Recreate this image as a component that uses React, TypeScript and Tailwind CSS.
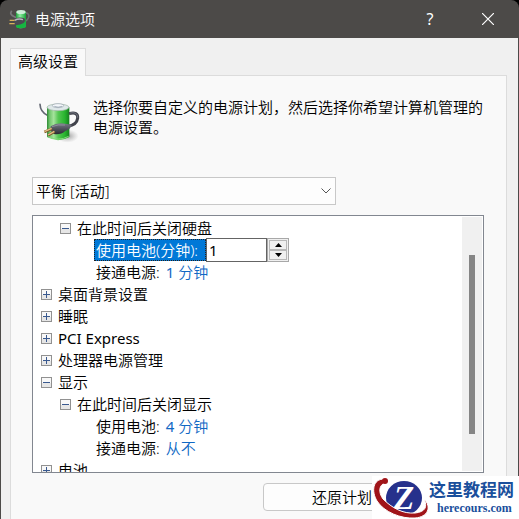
import { FC, ReactNode, useState } from "react";

interface TreeRowProps {
    level: 0 | 1 | 2
    open?: boolean
    label: string
    latin?: boolean
    children?: ReactNode
}

const TitleIcon: FC = () => (
    <svg className="h-[22px] w-[22px] shrink-0" viewBox="28 24 66 66" aria-hidden="true">
        <defs>
            <linearGradient id="small-body" x1="0" x2="1">
                <stop offset="0" stopColor="#1f9a3c" />
                <stop offset="0.4" stopColor="#8df0a0" />
                <stop offset="1" stopColor="#17a038" />
            </linearGradient>
        </defs>
        <path d="M36 32 Q28 44 44 50 L52 54" fill="none" stroke="#77777a" strokeWidth="5" />
        <path d="M76 38 Q92 40 86 54 Q80 66 68 66" fill="none" stroke="#6c6c70" strokeWidth="5" />
        <path d="M49 36 Q63 28 79 36 V81 Q63 89 49 81Z" fill="url(#small-body)" />
        <ellipse cx="64" cy="36" rx="14" ry="6" fill="#cdeed8" />
        <path d="M49 70 L79 66 V81 Q63 89 49 81Z" fill="#16b541" />
        <path d="M42 57 Q58 49 74 55 Q80 62 72 69 Q60 77 43 75Z" fill="#4a4b51" />
        <path d="M45 61 Q58 54 70 59" fill="none" stroke="#b7b8be" strokeWidth="4" />
        <path d="M30 61 H45 M29 71 H45" stroke="#d6b05a" strokeWidth="4" />
    </svg>
)

const BatteryIcon: FC = () => (
    <svg className="h-14 w-14 shrink-0" viewBox="0 0 168 168" aria-hidden="true">
        <defs>
            <linearGradient id="body" x1="0" x2="1">
                <stop offset="0" stopColor="#2e8b35" />
                <stop offset="0.12" stopColor="#72c66e" />
                <stop offset="0.3" stopColor="#a5e39c" />
                <stop offset="0.5" stopColor="#55c653" />
                <stop offset="0.8" stopColor="#27b42e" />
                <stop offset="1" stopColor="#16801f" />
            </linearGradient>
            <radialGradient id="shade">
                <stop offset="0" stopColor="#777" stopOpacity="0.7" />
                <stop offset="1" stopColor="#999" stopOpacity="0" />
            </radialGradient>
            <linearGradient id="plug" x1="0" y1="0" x2="0" y2="1">
                <stop offset="0" stopColor="#777a86" />
                <stop offset="1" stopColor="#2a2b33" />
            </linearGradient>
        </defs>
        <ellipse cx="112" cy="132" rx="34" ry="20" fill="url(#shade)" />
        <path d="M30 37 Q31 60 52 70" fill="none" stroke="#646873" strokeWidth="5" strokeLinecap="round" />
        <path d="M51 46 Q84 31 118 46 V135 Q84 154 51 135Z" fill="url(#body)" />
        <path d="M53 133 Q84 150 116 133" fill="none" stroke="#86dc7e" strokeWidth="3" />
        <ellipse cx="84" cy="46" rx="33" ry="10" fill="#dfe8e9" stroke="#9eb3a6" strokeWidth="2" />
        <ellipse cx="84" cy="41" rx="17" ry="6" fill="#f4f7fa" stroke="#9ba6b0" strokeWidth="2" />
        <path d="M73 43 Q84 48 96 43" fill="none" stroke="#8a98a6" strokeWidth="2" />
        <path d="M117 65 Q145 58 143 79 Q140 99 114 103" fill="none" stroke="#41434c" strokeWidth="9" />
        <path d="M119 63 Q143 58 143 77" fill="none" stroke="#878a95" strokeWidth="2" />
        <path d="M62 103 Q82 90 110 96 L125 99 Q121 113 106 117 Q92 129 72 126 L62 116Z" fill="url(#plug)" />
        <path d="M66 104 Q84 96 105 99" fill="none" stroke="#a0a2ac" strokeWidth="2" />
        <path d="M66 110 L43 120 M74 119 L54 130" stroke="#7d5b2b" strokeWidth="8" />
        <path d="M65 109 L43 119 M73 118 L54 129" stroke="#e3bf86" strokeWidth="4" />
    </svg>
)

const Toggle: FC<{ open: boolean, label: string }> = ({ open, label }) => (
    <button type="button" aria-label={label} aria-expanded={open} className="h-[11px] w-[11px] shrink-0">
        <svg className="block h-[11px] w-[11px]" viewBox="0 0 11 11" shapeRendering="crispEdges">
            <rect width="11" height="11" fill="#919191" />
            <rect x="1" y="1" width="9" height="9" fill="#f8f8f8" />
            <rect x="1" y="6" width="9" height="4" fill="#e6e6e6" />
            <rect x="2" y="5" width="7" height="1" fill="#39598f" />
            {!open && <rect x="5" y="2" width="1" height="7" fill="#39598f" />}
        </svg>
    </button>
)

const indent = {
    0: "pl-2",
    1: "pl-[27px]",
    2: "pl-[63px]",
}

const TreeRow: FC<TreeRowProps> = ({ level, open, label, latin, children }) => (
    <li className={`flex h-[22px] items-center ${indent[level]} ${latin ? "font-normal" : ""}`}>
        {open !== undefined && <Toggle open={open} label={label} />}
        {open !== undefined ? <span className="ml-1.5">{label}</span> : <span>{label}</span>}
        {children}
    </li>
)

const Value: FC<{ children: ReactNode }> = ({ children }) => (
    <a href="#" className="ml-1.5 text-[#1068c4]">{children}</a>
)

const Watermark: FC = () => (
    <div className="fixed right-0 bottom-0 flex h-[43px] w-[147px] bg-white text-[#1a4f9c]">
        <svg className="h-[43px] w-[57px] shrink-0" viewBox="0 0 57 43" aria-hidden="true">
            <ellipse cx="32" cy="22" rx="18" ry="17" fill="#26318c" />
            <text x="32" y="33" textAnchor="middle" fontFamily="Liberation Serif, serif" fontWeight="bold" fontStyle="italic" fontSize="34" fill="#fff">Z</text>
            <path d="M12 3 C1 3 -1 15 5 25 C12 36 29 43 43 42 C56 41 60 31 52 23 C56 31 53 36 43 37 C31 38 20 32 11 23 C6 16 7 9 13 7Z" fill="#a01419" stroke="#fff" strokeWidth="1" />
            <circle cx="13" cy="5" r="3" fill="#a01419" />
        </svg>
        <div className="flex flex-col pt-[3px]">
            <span className="font-['Noto_Sans_CJK_SC',sans-serif] text-[17px] leading-[19px] font-bold">这里教程网</span>
            <span className="pl-2 font-['Liberation_Serif',serif] text-[12px] leading-5 font-bold">herecours.com</span>
        </div>
    </div>
)

const App: FC = () => {

    const [minutes, setMinutes] = useState(1)

    return (
        <div className="flex min-h-screen flex-col bg-black font-['Noto_Sans','Noto_Sans_CJK_SC',sans-serif] text-[15px] leading-5 font-[350] text-black">
            <header className="flex h-[38px] items-center rounded-t-lg bg-[#4c4a48] pl-[9px] text-white">
                <TitleIcon />
                <h1 className="ml-1 flex-1 font-[350]">电源选项</h1>
                <button type="button" aria-label="帮助" className="h-full w-[58px] text-base font-normal">?</button>
                <button type="button" aria-label="关闭" className="mr-0.5 flex h-full w-[58px] items-center justify-center">
                    <svg className="h-3 w-3" viewBox="0 0 12 12" stroke="#fff" strokeWidth="1.2">
                        <path d="M0 0 L12 12 M12 0 L0 12" />
                    </svg>
                </button>
            </header>

            <main className="flex flex-1 flex-col border-x border-[#4c4a48] bg-[#f0f0f0] px-[9px] pt-[10px]">
                <div role="tablist" className="flex">
                    <button type="button" role="tab" aria-selected="true" className="relative z-10 -mb-px h-7 border border-b-0 border-[#dcdcdc] bg-[#f9f9f9] px-[7px] pb-1">高级设置</button>
                </div>

                <section className="mr-0.5 flex-1 border border-b-0 border-[#dcdcdc] bg-[#f9f9f9] pb-2">
                    <div className="flex pt-4 pl-[19px]">
                        <BatteryIcon />
                        <p className="mt-[5px] ml-[7px] mr-5 flex-1">选择你要自定义的电源计划，然后选择你希望计算机管理的电源设置。</p>
                    </div>

                    <div className="mt-[29px] mr-[22px] ml-[21px]">
                        <div className="relative w-[304px]">
                            <select aria-label="电源计划" className="h-7 w-full appearance-none border border-[#c8c8c8] bg-[#fdfdfd] pl-[3px]">
                                <option>平衡 [活动]</option>
                            </select>
                            <svg className="pointer-events-none absolute top-[11px] right-[5px] h-1.5 w-2.5" viewBox="0 0 10 6" fill="none" stroke="#555">
                                <path d="M0.5 0.5 L5 5 L9.5 0.5" />
                            </svg>
                        </div>

                        <div className="mt-2.5 flex h-[258px] border border-[#828790] bg-white">
                            <ul className="flex-1 overflow-hidden pt-px">
                                <TreeRow level={1} open={true} label="在此时间后关闭硬盘" />
                                <li className="flex h-[22px] items-center pl-[61px]">
                                    <label htmlFor="minutes" className="h-[22px] w-28 border border-dotted border-[#222] bg-[#0078d7] pl-px text-white">使用电池(分钟):</label>
                                    <input
                                        id="minutes"
                                        type="text"
                                        className="h-6 w-[61px] border border-[#646464] bg-white pl-0.5 font-normal"
                                        value={minutes}
                                        onChange={(e) => setMinutes(Number(e.target.value) || 0)}
                                    />
                                    <span className="flex h-6 w-[22px] flex-col border border-[#a8a8a8] bg-[#f0f0f0] p-px">
                                        <button type="button" aria-label="增加" className="flex flex-1 items-center justify-center border border-[#b8b8b8]" onClick={() => setMinutes(minutes + 1)}>
                                            <svg className="h-1 w-[7px]" viewBox="0 0 7 4"><path d="M0 4 L3.5 0 L7 4Z" /></svg>
                                        </button>
                                        <button type="button" aria-label="减少" className="flex flex-1 items-center justify-center border border-[#b8b8b8]" onClick={() => setMinutes(Math.max(0, minutes - 1))}>
                                            <svg className="h-1 w-[7px]" viewBox="0 0 7 4"><path d="M0 0 L3.5 4 L7 0Z" /></svg>
                                        </button>
                                    </span>
                                </li>
                                <TreeRow level={2} label="接通电源:"><Value><span className="font-normal">1</span> 分钟</Value></TreeRow>
                                <TreeRow level={0} open={false} label="桌面背景设置" />
                                <TreeRow level={0} open={false} label="睡眠" />
                                <TreeRow level={0} open={false} label="PCI Express" latin />
                                <TreeRow level={0} open={false} label="处理器电源管理" />
                                <TreeRow level={0} open={true} label="显示" />
                                <TreeRow level={1} open={true} label="在此时间后关闭显示" />
                                <TreeRow level={2} label="使用电池:"><Value><span className="font-normal">4</span> 分钟</Value></TreeRow>
                                <TreeRow level={2} label="接通电源:"><Value>从不</Value></TreeRow>
                                <TreeRow level={0} open={false} label="电池" />
                            </ul>
                            <div className="my-px mr-px w-5 shrink-0 bg-[#f0f0f0] px-[7px] pt-[38px]">
                                <div className="h-[179px] bg-[#858585]"></div>
                            </div>
                        </div>

                        <div className="mt-2.5 flex justify-end">
                            <button type="button" className="h-7 w-[221px] rounded-sm border border-[#c8c8c8] bg-[#fdfdfd] pl-12 text-left">还原计划</button>
                        </div>
                    </div>
                </section>
            </main>

            <Watermark />
        </div>
    )
}

export default App
